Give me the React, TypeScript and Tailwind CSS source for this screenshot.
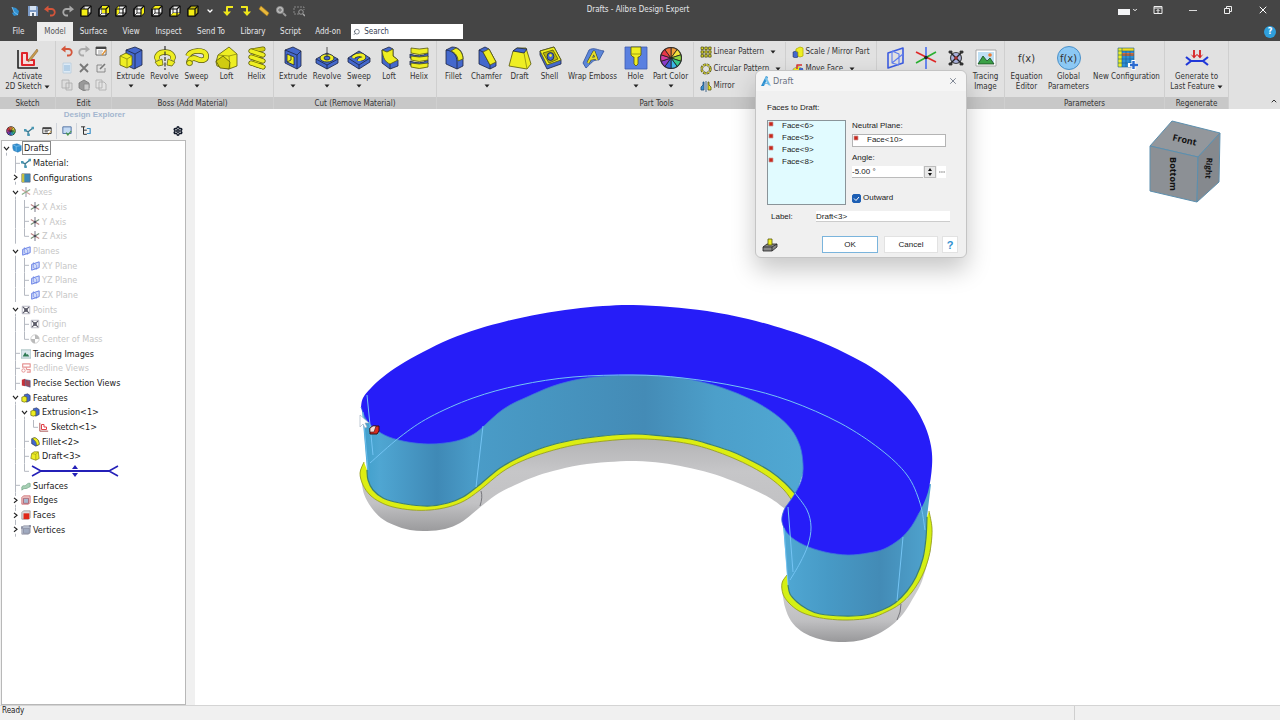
import type { ReactNode } from "react";
import { ChevronDown, ChevronUp, Search, Settings, X } from "lucide-react";
import clsx from "clsx";

type Point = [number, number];

const BLUE = "#4468cc";
const DARK = "#1c2440";
const YEL = "#eeee22";
const OLIVE = "#b4b000";

// Smooth curve through a list of points
function curve(pts: Point[], start = "M") {
  let d = `${start}${pts[0][0]} ${pts[0][1]}`;
  for (let i = 0; i < pts.length - 1; i++) {
    const a = pts[i - 1] ?? pts[i];
    const b = pts[i];
    const c = pts[i + 1];
    const e = pts[i + 2] ?? c;
    d += `C${b[0] + (c[0] - a[0]) / 6} ${b[1] + (c[1] - a[1]) / 6} ${c[0] - (e[0] - b[0]) / 6} ${c[1] - (e[1] - b[1]) / 6} ${c[0]} ${c[1]}`;
  }
  return d;
}

/* ---------- icons ---------- */

function Icon({ size = "size-6", box = 24, children }: { size?: string; box?: number; children: ReactNode }) {
  return (
    <svg
      viewBox={`0 0 ${box} ${box}`}
      className={clsx(size, "shrink-0")}
      fill="none"
      strokeWidth=".8"
      strokeLinejoin="round"
      aria-hidden="true"
    >
      {children}
    </svg>
  );
}

const tileIcons: Record<string, ReactNode> = {
  sketch: (
    <>
      <path d="M2 4v18h20" stroke="#222" strokeWidth="1.600" />
      <path d="M6 7h5v7h7v5H6z" stroke="#e0252b" strokeWidth="2" fill="#f7dcdc" />
      <path d="M21 3l-8 10-1 3 3-2 7-9z" fill="#c99a4a" stroke="#8a6a3a" strokeWidth=".6" />
    </>
  ),
  extrude: (
    <>
      <path d="M7 4l9-3 7 3v15l-8 4-8-4z" fill={BLUE} stroke={DARK} />
      <path d="M7 4l9 4v15M16 8l7-4" stroke={DARK} />
      <path d="M1 10l6-3 6 3v9l-5 3-7-3z" fill={YEL} stroke="#55550a" />
      <path d="M1 10l7 3 5-3M8 13v9" stroke="#8a8a10" />
    </>
  ),
  revolve: (
    <>
      <path d="M5 14c-3-4 1-8 7-8s10 4 7 8" stroke="#66660a" strokeWidth="5.400" />
      <path d="M5 14c-3-4 1-8 7-8s10 4 7 8" stroke={YEL} strokeWidth="4" />
      <path d="M2 16l7-3 1 6-5 1zM22 16l-7-3-1 6 5 1z" fill={YEL} stroke="#66660a" />
      <path d="M12 0v24" stroke="#333" strokeWidth="1.200" strokeDasharray="4 1.500" />
    </>
  ),
  sweep: (
    <>
      <path d="M3 10c2-6 17-7 18-1s-5 6-9 4-8 0-8 4" stroke="#55550a" strokeWidth="5.600" />
      <path d="M3 10c2-6 17-7 18-1s-5 6-9 4-8 0-8 4" stroke={YEL} strokeWidth="4.200" />
      <ellipse cx="4.500" cy="17" rx="3" ry="2.600" fill={YEL} stroke="#55550a" />
    </>
  ),
  loft: (
    <>
      <path d="M3 9L14 1l8 7v12l-8 3-12-3-1-4z" fill={YEL} stroke="#55550a" />
      <path d="M3 9l11 1 8-2M14 10l1 13" stroke="#8a8a10" />
      <path d="M1 15l7-5 7 6-1 7-9-1z" fill="#d0cc10" stroke="#55550a" />
    </>
  ),
  helix: (
    <>
      <path d="M6 5l12-2M6 5l12 4M6 11l12-2M6 11l12 4M6 17l12-2M6 17l12 4" stroke="#66660a" strokeWidth="5" strokeLinecap="round" />
      <path d="M6 5l12-2M6 11l12-2M6 17l12-2" stroke="#d4d010" strokeWidth="3.600" strokeLinecap="round" />
      <path d="M6 5l12 4M6 11l12 4M6 17l12 4" stroke="#55550a" strokeWidth="4.600" strokeLinecap="round" />
      <path d="M6 5l12 4M6 11l12 4M6 17l12 4" stroke={YEL} strokeWidth="3.600" strokeLinecap="round" />
    </>
  ),
  cutExtrude: (
    <>
      <path d="M4 4l8-3 8 4v15l-4 3-12-6z" fill={BLUE} stroke={DARK} />
      <path d="M4 4l12 5 4-4M16 9v14" stroke={DARK} />
      <path d="M6 8l7 3v8l-7-3z" fill={YEL} stroke={DARK} />
      <path d="M6 16l4-2v-4" stroke={DARK} />
    </>
  ),
  cutRevolve: (
    <>
      <path d="M1 13L12 7l11 6v4l-11 6-11-6z" fill={BLUE} stroke={DARK} />
      <path d="M1 13l11 6 11-6M12 19v4" stroke={DARK} />
      <ellipse cx="12" cy="12" rx="7" ry="4" fill={YEL} stroke={DARK} />
      <ellipse cx="12" cy="12" rx="3" ry="2" fill={BLUE} stroke={DARK} />
      <path d="M12 1v10" stroke="#333" />
    </>
  ),
  cutSweep: (
    <>
      <path d="M1 12L12 5l11 7v4l-11 7-11-7z" fill={BLUE} stroke={DARK} />
      <path d="M1 12l11 7 11-7M12 19v4" stroke={DARK} />
      <path d="M6 12c2-4 11-4 11-1s-5 1-5 4" stroke={DARK} strokeWidth="4.200" />
      <path d="M6 12c2-4 11-4 11-1s-5 1-5 4" stroke={YEL} strokeWidth="3" />
    </>
  ),
  cutLoft: (
    <>
      <path d="M5 4l7-3 4 2v7l5 4v6l-8 3-8-6z" fill={BLUE} stroke={DARK} />
      <path d="M5 4l5 2 6-3v7l5 4-8 4c-5-2-7-6-8-14z" fill={YEL} stroke="#55550a" />
      <path d="M13 18v5" stroke={DARK} />
    </>
  ),
  cutHelix: (
    <>
      <path d="M3 8q10 4 18-1v4q-8 3-18 1zM3 15q10 4 18-1v4q-8 3-18 1z" fill={BLUE} stroke={DARK} />
      <path d="M4 2q8 2 17 0v5q-9 3-17 0zM4 10q8 2 17 0v4q-9 3-17 0zM4 17q8 2 17 0v4q-9 3-17 0z" fill={YEL} stroke="#55550a" />
    </>
  ),
  fillet: (
    <>
      <path d="M4 4l6-3c8 0 11 6 11 12v7l-6 3L4 18z" fill={BLUE} stroke={DARK} />
      <path d="M4 4c8 1 11 6 11 12v7" stroke={DARK} />
      <path d="M9 5l5-3c5 2 7 7 7 11l-5 2c0-4-2-8-7-10z" fill={YEL} stroke="#55550a" />
    </>
  ),
  chamfer: (
    <>
      <path d="M4 4l6-3 4 2 7 13v4l-6 3L4 18z" fill={BLUE} stroke={DARK} />
      <path d="M4 4l4 2 7 13v4" stroke={DARK} />
      <path d="M8 6l6-3 7 13-6 3z" fill={YEL} stroke="#55550a" />
    </>
  ),
  draft: (
    <>
      <path d="M5 5l4-3h9l5 16-4 5L1 20z" fill={YEL} stroke="#55550a" />
      <path d="M5 5l4-3 10 1-3 4z" fill={BLUE} stroke={DARK} />
      <path d="M16 7l3 16" stroke="#8a8a10" />
    </>
  ),
  shell: (
    <>
      <path d="M2 5l14-4 7 13v4L9 23 2 9z" fill={BLUE} stroke={DARK} />
      <path d="M2 5l14-4 7 13-14 5z" fill={YEL} stroke="#55550a" />
      <path d="M5 7l10-3 5 9-9 4z" fill="#b9b50c" stroke="#55550a" />
      <ellipse cx="12.500" cy="10.500" rx="3.400" ry="4" fill={BLUE} stroke={DARK} />
      <circle cx="12.500" cy="9.500" r="1.400" fill={YEL} />
    </>
  ),
  wrap: (
    <>
      <path d="M8 4c5-3 8 0 15 1l-5 9c-6-1-8 4-13 8L2 17z" fill="#5c86d8" stroke="#2f4f9c" />
      <path d="M7 17l6-11 3 8M9 13l6-1" stroke="#33401c" strokeWidth="3" />
      <path d="M7 17l6-11 3 8M9 13l6-1" stroke="#e6dc2a" strokeWidth="2" />
    </>
  ),
  hole: (
    <>
      <path d="M1 1h22v22H1z" fill="#5a80e0" stroke="#3c5cb0" />
      <path d="M7 1h10v8l-2 2h-1v7l-2 2-2-2v-7H9L7 9z" fill={YEL} stroke="#55550a" />
      <path d="M7 8h10" stroke="#8a8a10" />
    </>
  ),
  plane: (
    <>
      <path d="M4 7l15-5v15L4 22z" stroke="#3c5ce0" strokeWidth="1.600" />
      <path d="M8 5l7 3v11M8 5v12l7 2M8 17l11-9" stroke="#5c7cf0" strokeWidth="1.100" />
    </>
  ),
  axis: (
    <>
      <path d="M12 1v22" stroke="#4a70f0" strokeWidth="1.600" />
      <path d="M2 6l20 10" stroke="#e02828" strokeWidth="1.600" />
      <path d="M2 17L22 6" stroke="#2ab030" strokeWidth="1.600" />
      <circle cx="12" cy="11.500" r="1.800" fill="#222" />
    </>
  ),
  point: (
    <>
      <circle cx="12" cy="12" r="5.500" fill="#a8b0dc" stroke="#444" strokeWidth="1.200" />
      <path d="M6 6l12 12M18 6L6 18" stroke="#222" strokeWidth="1.400" />
      <path d="M5 5h3v2H5zM16 5h3v2h-3zM5 17h3v2H5zM16 17h3v2h-3z" fill="#333" stroke="#333" />
      <circle cx="12" cy="12" r="1.800" fill="#a03030" />
    </>
  ),
  tracing: (
    <>
      <path d="M2 4h20v16H2z" fill="#fff" stroke="#999" />
      <path d="M4 6h16v12H4z" fill="#bfe0f4" />
      <path d="M4 18l5-8 4 5 3-3 4 6z" fill="#3aa046" stroke="#174a1c" />
      <circle cx="16" cy="9" r="1.800" fill="#f07a30" />
    </>
  ),
  config: (
    <>
      <path d="M3 2h16v19H3z" fill="#2f8fd8" />
      <path d="M3 2h4v19H3z" fill={YEL} />
      <path d="M7 2h12v3H7z" fill="#f3dc1c" />
      <path d="M7 7h12v3H7z" fill="#e06a30" />
      <path d="M3 2h16v19H3zM7 2v19M11 5v16M15 5v16M3 5h16M3 9h16M3 13h16M3 17h16" stroke="#1a5a88" strokeWidth=".6" />
      <path d="M18.500 14v10M13 19h10" stroke="#fff" strokeWidth="4" />
      <path d="M18.500 15v8M15 19h8" stroke="#2a6ad0" strokeWidth="2.400" />
    </>
  ),
  regen: (
    <>
      <path d="M9 4v7M15 4v7" stroke="#d82020" strokeWidth="1.800" />
      <path d="M5.500 8L9 12.500l3-3.500 3 3.500L18.500 8 15 10.500 12 8l-3 2.500z" fill="#d82020" />
      <path d="M1 11l5 4h12l5-4M1 19l5-4M23 19l-5-4" stroke="#2038d8" strokeWidth="2.200" />
    </>
  ),
};

const wheelColors = ["#f2a03c", "#f4e23c", "#8ed644", "#35c88a", "#39b8e8", "#3d62d8", "#8a3cc8", "#d03ca0", "#e83848", "#f2703c"];

function ColorWheel() {
  return (
    <>
      <circle cx="12" cy="12" r="11" fill="#222" />
      {wheelColors.map((color, i) => {
        const a = ((i * 36 - 90) * Math.PI) / 180;
        const b = ((i * 36 - 54) * Math.PI) / 180;
        return (
          <path
            key={color}
            d={`M12 12L${12 + 10.4 * Math.cos(a)} ${12 + 10.4 * Math.sin(a)}A10.400 10.400 0 0 1 ${12 + 10.4 * Math.cos(b)} ${12 + 10.4 * Math.sin(b)}z`}
            fill={color}
            stroke="#222"
          />
        );
      })}
    </>
  );
}

function UndoIcon({ flip, color }: { flip?: boolean; color: string }) {
  return (
    <Icon size="size-3" box={12}>
      <g transform={flip ? "matrix(-1 0 0 1 12 0)" : undefined}>
        <path d="M3 4h4.500a3 3 0 0 1 0 6.500H6" stroke={color} strokeWidth="1.800" />
        <path d="M0 4.200L4.500.5v7z" fill={color} />
      </g>
    </Icon>
  );
}

const cubeFaces: Record<string, string> = {
  front: "M1 4h7v7H1z",
  back: "M4 1h7v7H4z",
  left: "M1 4l3-3v7l-3 3z",
  right: "M8 4l3-3v7l-3 3z",
  top: "M1 4l3-3h7L8 4z",
  bottom: "M1 11l3-3h7l-3 3z",
};

function CubeIcon({ face }: { face: string }) {
  const solid = face === "all";
  return (
    <Icon size="size-3" box={12}>
      <path d="M1 4l3-3h7v7l-3 3H1z" fill={solid ? "#c8c010" : "#f4f4f4"} stroke="#0c0c0c" strokeWidth="1.200" />
      {!solid && <path d="M4 1v7h7M4 8l-3 3" stroke="#0c0c0c" />}
      <path d={cubeFaces[solid ? "front" : face]} fill="#f4ee14" />
      <path d="M1 4h7v7H1zM8 4l3-3" stroke="#0c0c0c" strokeWidth="1.200" />
    </Icon>
  );
}

/* ---------- title bar ---------- */

const quickTools: [string, ReactNode][] = [
  ["Home", <Icon size="size-3" box={12}><path d="M3 2l4 1 3 3-1 4-4 1-2-3 2-1z" fill="#2f8fd0" /><path d="M3 2l2 5 4 3" stroke="#8cc8f0" /></Icon>],
  ["Save", <Icon size="size-3" box={12}><path d="M1 1h9l1 1v9H1z" fill="#7d9cc8" /><path d="M3 1h6v4H3z" fill="#d5e2f2" /><path d="M3 7h6v4H3z" fill="#eef2f8" /><path d="M5 8h2v3H5z" fill="#567" /></Icon>],
  ["Undo", <UndoIcon color="#d4553a" />],
  ["Redo", <UndoIcon color="#a8a8a8" flip />],
  ["Front", <CubeIcon face="front" />],
  ["Back", <CubeIcon face="back" />],
  ["Left", <CubeIcon face="left" />],
  ["Right", <CubeIcon face="right" />],
  ["Top", <CubeIcon face="top" />],
  ["Bottom", <CubeIcon face="bottom" />],
  ["Isometric", <CubeIcon face="all" />],
  ["More views", <ChevronDown className="size-2 text-white" strokeWidth={4} />],
  ["Rotate left", <Icon size="size-3" box={12}><path d="M11 2H5v6" stroke="#f0e81c" strokeWidth="2" /><path d="M1 6.500h8L5 11z" fill="#f0e81c" /></Icon>],
  ["Rotate right", <Icon size="size-3" box={12}><path d="M1 2h6v6" stroke="#f0e81c" strokeWidth="2" /><path d="M3 6.500h8L7 11z" fill="#f0e81c" /></Icon>],
  ["Measure", <Icon size="size-3" box={12}><path d="M3 1l8 7-2 3-8-7z" fill="#e8b83c" stroke="#a87818" strokeWidth=".6" /></Icon>],
  ["Zoom", <Icon size="size-3" box={12}><circle cx="5" cy="5" r="3.600" fill="#bbb" stroke="#8c8c8c" /><path d="M8 8l3 3" stroke="#999" strokeWidth="2" /><path d="M3 5h4M5 3v4" stroke="#555" /></Icon>],
  ["Zoom window", <Icon size="size-3" box={12}><path d="M6 9H1V2h10v3" stroke="#999" strokeDasharray="2 1" /><circle cx="8" cy="7" r="2.300" stroke="#aaa" /><path d="M10 9l2 2" stroke="#aaa" strokeWidth="1.400" /></Icon>],
];

function TitleBar() {
  return (
    <div className="flex h-[22px] items-center text-white">
      <div className="flex flex-1">
        <div className="ml-1.5 grid w-[302px] grid-cols-17">
          {quickTools.map(([name, icon]) => (
            <button key={name} aria-label={name} className="flex h-5 items-center justify-center">
              {icon}
            </button>
          ))}
        </div>
      </div>
      <h1 className="pb-0.5 pr-1 text-[8px] text-gray-200">Drafts - Alibre Design Expert</h1>
      <div className="flex flex-1 items-center justify-end pb-0.5">
        <button aria-label="Account" className="flex w-6 items-center justify-center gap-0.5">
          <span className="mt-1 h-1.5 w-3 bg-gray-100" />
          <ChevronDown className="size-1.5" strokeWidth={4} />
        </button>
        <button aria-label="Ribbon display" className="flex w-[35px] justify-center">
          <Icon size="size-2.5" box={10}><path d="M1 1.500h8v7H1zM1 3h8M5 8V4.500M3.500 6L5 4.500 6.500 6" stroke="#eee" strokeWidth="1" /></Icon>
        </button>
        <button aria-label="Minimize" className="flex w-[35px] justify-center">
          <Icon size="size-2.5" box={10}><path d="M1 5.500h8" stroke="#ddd" strokeWidth="1" /></Icon>
        </button>
        <button aria-label="Restore" className="flex w-[35px] justify-center">
          <Icon size="size-2.5" box={10}><path d="M1.500 3.500h5v5h-5zM3.500 3V1.500h5v5H7" stroke="#eee" strokeWidth="1" /></Icon>
        </button>
        <button aria-label="Close" className="flex w-[35px] justify-center">
          <X className="size-3" strokeWidth={2} />
        </button>
      </div>
    </div>
  );
}

const tabs: [string, string][] = [
  ["File", "w-[37px]"],
  ["Model", "w-9"],
  ["Surface", "w-[41px]"],
  ["View", "w-[34px]"],
  ["Inspect", "w-[41px]"],
  ["Send To", "w-11"],
  ["Library", "w-10"],
  ["Script", "w-[35px]"],
  ["Add-on", "w-10"],
];

function TabBar() {
  return (
    <nav className="flex h-[19px] items-stretch text-[8px] text-gray-200">
      {tabs.map(([name, width]) => (
        <button key={name} className={clsx(width, "text-center", name === "Model" && "bg-[#ececec] text-[#555]")}>
          {name}
        </button>
      ))}
      <label className="ml-[3px] mt-0.5 flex h-[15px] w-28 items-center gap-1 bg-white pl-0.5">
        <Search className="size-2 -scale-x-100 text-gray-700" />
        <input aria-label="Search" placeholder="Search" className="w-full text-[8px] outline-none placeholder:text-gray-700" />
      </label>
      <button aria-label="Help" className="ml-auto mr-1 mt-1 flex size-3 items-center justify-center rounded-full bg-[#2f9fdc] text-[9px] font-bold text-white">
        ?
      </button>
    </nav>
  );
}

/* ---------- ribbon ---------- */

function Arrow() {
  return (
    <svg viewBox="0 0 6 4" className="inline-block h-1 w-1.5 shrink-0" aria-hidden="true">
      <path d="M.5.5h5L3 3.500z" fill="#222" />
    </svg>
  );
}

type TileProps = { icon: string; label: string; second?: string; width?: string; arrow?: boolean; inlineArrow?: boolean };

function Tile({ icon, label, second, width = "w-[30px]", arrow, inlineArrow }: TileProps) {
  return (
    <button aria-label={label || icon} className={clsx(width, "flex flex-col items-center whitespace-nowrap")}>
      {icon === "fx" || icon === "fxGlobal" ? (
        <span
          className={clsx(
            "flex size-6 items-center justify-center rounded-full text-[11px] leading-none",
            icon === "fxGlobal" && "border border-[#4a90c8] bg-[#8cc8f4]"
          )}
        >
          f(x)
        </span>
      ) : (
        <Icon>{icon === "wheel" ? <ColorWheel /> : tileIcons[icon]}</Icon>
      )}
      <span className="mt-0.5">{label}</span>
      {second && (
        <span className="flex items-center gap-0.5">
          {second}
          {inlineArrow && <Arrow />}
        </span>
      )}
      {arrow && (
        <span className="flex h-2 items-center">
          <Arrow />
        </span>
      )}
    </button>
  );
}

function Group({ title, width, children }: { title?: string; width: string; children: ReactNode }) {
  return (
    <section className={clsx(width, "flex shrink-0 flex-col border-r border-[#cfcfcf]")}>
      <div className="flex h-14 justify-center pt-[5px]">{children}</div>
      <div className="h-3 bg-[#c8c8c8] pt-px text-center leading-3">{title}</div>
    </section>
  );
}

const boss: TileProps[] = [
  { icon: "extrude", label: "Extrude", width: "w-[34px]", arrow: true },
  { icon: "revolve", label: "Revolve", width: "w-[34px]", arrow: true },
  { icon: "sweep", label: "Sweep", arrow: true },
  { icon: "loft", label: "Loft" },
  { icon: "helix", label: "Helix" },
];

const cut: TileProps[] = [
  { icon: "cutExtrude", label: "Extrude", width: "w-[34px]", arrow: true },
  { icon: "cutRevolve", label: "Revolve", width: "w-[34px]", arrow: true },
  { icon: "cutSweep", label: "Sweep", arrow: true },
  { icon: "cutLoft", label: "Loft" },
  { icon: "cutHelix", label: "Helix" },
];

const partTools: TileProps[] = [
  { icon: "fillet", label: "Fillet" },
  { icon: "chamfer", label: "Chamfer", width: "w-9", arrow: true },
  { icon: "draft", label: "Draft" },
  { icon: "shell", label: "Shell" },
  { icon: "wrap", label: "Wrap Emboss", width: "w-14" },
  { icon: "hole", label: "Hole", arrow: true },
  { icon: "wheel", label: "Part Color", width: "w-10", arrow: true },
];

const editIcons: [string, ReactNode][] = [
  ["Undo", <UndoIcon color="#d4553a" />],
  ["Redo", <UndoIcon color="#aaa" flip />],
  ["Properties", <Icon size="size-3" box={12}><path d="M1 2h10v8H1z" fill="#fff" stroke="#444" /><path d="M1 2h10v2H1z" fill="#444" /><path d="M3 6h5M3 8h4" stroke="#888" /><path d="M11 5L7 10" stroke="#e0953a" strokeWidth="1.500" /></Icon>],
  ["Select", <Icon size="size-3" box={12}><path d="M2 1h8v10H2z" fill="#dceaf6" stroke="#b8ccdc" /><path d="M3 4h6M3 6h6M3 8h6" stroke="#7aa8d0" /></Icon>],
  ["Delete", <Icon size="size-3" box={12}><path d="M2 2l8 8M10 2l-8 8" stroke="#777" strokeWidth="1.800" /></Icon>],
  ["Edit", <Icon size="size-3" box={12}><path d="M7 3H2v7h8V6" stroke="#777" /><path d="M10 2L5 7" stroke="#777" strokeWidth="1.600" /></Icon>],
  ["Cut", <Icon size="size-3" box={12}><path d="M1 1h7v8H1zM5 4h6v7H5z" fill="#ddd" stroke="#aaa" /></Icon>],
  ["Paste", <Icon size="size-3" box={12}><path d="M1 4l5-3 5 3v5l-5 3-5-3z" fill="#999" stroke="#777" /><path d="M6 5h5v6H6z" fill="#ccc" stroke="#888" /></Icon>],
  ["Copy", <Icon size="size-3" box={12}><path d="M1 1h6v8H1zM4 3h5l2 2v6H4z" fill="#e4e4e4" stroke="#aaa" /></Icon>],
];

const PatternIcon = (
  <Icon size="size-3" box={12}>
    <path d="M1 1h2.500v2.500H1zM4.800 1h2.500v2.500H4.800zM8.600 1h2.500v2.500H8.600zM1 4.800h2.500v2.500H1zM4.800 4.800h2.500v2.500H4.800zM8.600 4.800h2.500v2.500H8.600zM1 8.600h2.500v2.500H1zM4.800 8.600h2.500v2.500H4.800zM8.600 8.600h2.500v2.500H8.600z" fill="#dcd820" stroke="#55551a" />
  </Icon>
);

const CircularIcon = (
  <Icon size="size-3" box={12}>
    <circle cx="6" cy="6" r="4.300" stroke="#44441a" strokeWidth="2.600" strokeDasharray="2.600 .8" />
    <circle cx="6" cy="6" r="4.300" stroke="#d8d430" strokeWidth="1.300" strokeDasharray="2.200 1.200" />
  </Icon>
);

const MirrorIcon = (
  <Icon size="size-3" box={12}>
    <path d="M1 7l2-2V2h1v8H1zM6 1v11" fill="#3a90d0" stroke="#1c4c78" />
    <path d="M11 7L9 5V2H8v8h3z" fill="#ece41c" stroke="#55551a" />
  </Icon>
);

const ScaleIcon = (
  <Icon size="size-3" box={12}>
    <path d="M1 6l3-1 2 1v5l-2 1-3-1z" fill={BLUE} stroke={DARK} strokeWidth=".5" />
    <path d="M4 3l4-2 3 1v8l-3 1-2-1V6L4 5z" fill={YEL} stroke={OLIVE} />
  </Icon>
);

const MoveIcon = (
  <Icon size="size-3" box={12}>
    <path d="M1 6l5-3 5 3v5H1z" fill={YEL} stroke="#888" strokeWidth=".6" />
    <path d="M5 6V2h5" stroke="#d83030" strokeWidth="1.500" />
    <path d="M7 5h4v5H7z" fill={BLUE} />
  </Icon>
);

function SmallTool({ icon, label, arrow }: { icon: ReactNode; label: string; arrow?: boolean }) {
  return (
    <button className="flex h-[17px] items-center gap-0.5 whitespace-nowrap">
      {icon}
      <span>{label}</span>
      {arrow && (
        <span className="ml-1 flex">
          <Arrow />
        </span>
      )}
    </button>
  );
}

function Ribbon() {
  return (
    <div className="flex bg-[#e1e1e1] text-[8px] leading-[10px] text-[#333]">
      <Group title="Sketch" width="w-14">
        <Tile icon="sketch" label="Activate" second="2D Sketch" width="w-14" inlineArrow />
      </Group>
      <Group title="Edit" width="w-14">
        <div className="-mt-1 grid h-[51px] w-[51px] grid-cols-3">
          {editIcons.map(([name, icon]) => (
            <button key={name} aria-label={name} className="flex items-center justify-center">
              {icon}
            </button>
          ))}
        </div>
      </Group>
      <Group title="Boss (Add Material)" width="w-[162px]">
        {boss.map((t) => <Tile key={t.icon} {...t} />)}
      </Group>
      <Group title="Cut (Remove Material)" width="w-[163px]">
        {cut.map((t) => <Tile key={t.icon} {...t} />)}
      </Group>
      <Group title="Part Tools" width="w-[440px]">
        {partTools.map((t) => <Tile key={t.icon} {...t} />)}
        <div className="-mt-1 ml-0.5 flex w-[92px] flex-col border-l border-[#cfcfcf] pl-1.5 pt-px">
          <SmallTool icon={PatternIcon} label="Linear Pattern" arrow />
          <SmallTool icon={CircularIcon} label="Circular Pattern" arrow />
          <SmallTool icon={MirrorIcon} label="Mirror" />
        </div>
        <div className="-mt-1 flex w-[90px] flex-col border-l border-[#cfcfcf] pl-1.5 pt-px">
          <SmallTool icon={ScaleIcon} label="Scale / Mirror Part" />
          <SmallTool icon={MoveIcon} label="Move Face" arrow />
        </div>
      </Group>
      <Group width="w-32">
        <Tile icon="plane" label="" />
        <Tile icon="axis" label="" />
        <Tile icon="point" label="" />
        <Tile icon="tracing" label="Tracing" second="Image" />
      </Group>
      <Group title="Parameters" width="w-40">
        <Tile icon="fx" label="Equation" second="Editor" width="w-10" />
        <Tile icon="fxGlobal" label="Global" second="Parameters" width="w-11" />
        <Tile icon="config" label="New Configuration" width="w-[72px]" />
      </Group>
      <Group title="Regenerate" width="w-16">
        <Tile icon="regen" label="Generate to" second="Last Feature" width="w-16" inlineArrow />
      </Group>
      <button aria-label="Collapse ribbon" className="ml-auto flex items-end p-0.5 pb-1">
        <ChevronUp className="size-2" strokeWidth={3} />
      </button>
    </div>
  );
}

/* ---------- design explorer ---------- */

const small: Record<string, ReactNode> = {
  part: (
    <>
      <path d="M1 2l5-1 5 2v6l-4 2-5-2-1-3z" fill="#2f8fd0" stroke="#1c6aa8" strokeWidth=".6" />
      <path d="M1 2l4 2 6-1M5 4v6" stroke="#8cc8f0" />
    </>
  ),
  material: (
    <>
      <path d="M1 5l4 2 5-4M5 7v4" stroke="#3a7890" strokeWidth="1.600" />
      <path d="M0 3.500h3v3H0zM9 1h3v3H9zM4 9h3v3H4z" fill="#4a98b4" />
    </>
  ),
  configs: (
    <>
      <path d="M1 1h10v10H1z" fill="#3a88b8" stroke="#667" />
      <path d="M1 1h3v10H1z" fill="#c8c040" />
    </>
  ),
  axis: (
    <>
      <path d="M6 0v12" stroke="#667" strokeWidth="1.300" />
      <path d="M1 3l10 6" stroke="#a66" strokeWidth="1.300" />
      <path d="M1 9l10-6" stroke="#575" strokeWidth="1.300" />
      <circle cx="6" cy="6" r="1.600" fill="#223" />
    </>
  ),
  axes: (
    <>
      <path d="M6 0v12" stroke="#889" strokeWidth="1.300" />
      <path d="M1 3l10 6" stroke="#c88" strokeWidth="1.300" />
      <path d="M1 9l10-6" stroke="#6a9a6a" strokeWidth="1.300" />
    </>
  ),
  plane: (
    <>
      <path d="M2 4l9-3v7l-9 3z" fill="#c8d4fa" stroke="#4a68e0" strokeWidth="1.200" />
      <path d="M4 2l4 3v5M4 2v6l4 2" stroke="#4a68e0" />
    </>
  ),
  point: (
    <>
      <path d="M2 2l8 8M10 2l-8 8" stroke="#334" strokeWidth="1.400" />
      <path d="M1.500 1.500h9v9h-9z" stroke="#99a" strokeWidth="1" />
      <circle cx="6" cy="6" r="2.300" fill="#334" />
    </>
  ),
  mass: (
    <>
      <circle cx="6" cy="6" r="5" fill="#fff" stroke="#aaa" />
      <path d="M6 6V1a5 5 0 0 1 5 5zM6 6v5a5 5 0 0 1-5-5z" fill="#aaa" />
    </>
  ),
  tracing: (
    <>
      <path d="M0 1h12v10H0z" fill="#dce8ee" stroke="#8aa" />
      <path d="M2 9l3-5 2 3 1-1 2 3z" fill="#2f7a54" />
    </>
  ),
  redline: (
    <>
      <path d="M2 1h9v4H2z" stroke="#e07a7a" strokeWidth="1.400" />
      <circle cx="3" cy="9" r="2" stroke="#e07a7a" strokeWidth="1.200" />
      <path d="M6 5l1 3h4v3H7" stroke="#e07a7a" strokeWidth="1.400" />
    </>
  ),
  section: (
    <>
      <path d="M1 2l4-1v9l-4-1z" fill="#c83038" />
      <path d="M5 2l6 1v8l-6-2z" fill="#a04858" stroke="#4a5a8a" />
    </>
  ),
  features: (
    <>
      <path d="M4 2l4-1 3 2v6l-4 2-3-2z" fill={BLUE} stroke={DARK} strokeWidth=".6" />
      <path d="M1 5l3-1 3 1v5l-3 1-3-1z" fill={YEL} stroke="#66660a" />
    </>
  ),
  sketch: (
    <>
      <path d="M1 1v10h10" stroke="#a55" strokeWidth="1.200" />
      <path d="M3 3h3v3h3v3H3z" stroke="#e04048" strokeWidth="1.200" />
    </>
  ),
  fillet: (
    <>
      <path d="M2 2l3-1c4 0 6 4 6 8l-4 2-5-3z" fill={BLUE} stroke={DARK} strokeWidth=".7" />
      <path d="M5 1c4 0 6 4 6 8l-3 1c0-4-2-6-5-8z" fill={YEL} stroke="#66660a" strokeWidth=".6" />
    </>
  ),
  draft: (
    <>
      <path d="M2 3l3-2h5l1 8-4 2-6-2z" fill={YEL} stroke="#77770a" />
      <path d="M2 3l5 1v7M7 4l3-3" stroke="#9a9610" />
    </>
  ),
  surfaces: <path d="M1 7c2-3 3 0 5-2s3-3 5-2v4c-2 0-3 2-5 2s-3 0-5 2z" fill="#a8d0b4" stroke="#6aa080" />,
  edges: (
    <>
      <path d="M1 3l2-2h8v8l-2 2H1z" fill="#f0c8c8" stroke="#c04850" />
      <path d="M3 4h6v6H3z" fill="#a8b8d0" stroke="#a04858" />
    </>
  ),
  faces: (
    <>
      <path d="M1 3l2-2h8v8l-2 2H1z" fill="#ddd" stroke="#888" />
      <path d="M3 4h7v7H3z" fill="#e02818" />
    </>
  ),
  vertices: (
    <>
      <path d="M1 3l2-2h8v8l-2 2H1z" fill="#bcc4d4" stroke="#889" />
      <path d="M0 2h2v2H0zM10 0h2v2h-2zM3 4h7v6H3z" fill="#a0aac0" stroke="#778" strokeWidth=".6" />
    </>
  ),
};

// One letter per column: "." blank, "|" line, "t" tee, "l" corner, "v" open, ">" closed
type Row = [cells: string, icon: string, label: string, dim?: boolean];

const rows: Row[] = [
  ["v", "part", "Drafts"],
  [".t", "material", "Material:"],
  [".>", "configs", "Configurations"],
  [".v", "axes", "Axes", true],
  [".|t", "axis", "X Axis", true],
  [".|t", "axis", "Y Axis", true],
  [".|l", "axis", "Z Axis", true],
  [".v", "plane", "Planes", true],
  [".|t", "plane", "XY Plane", true],
  [".|t", "plane", "YZ Plane", true],
  [".|l", "plane", "ZX Plane", true],
  [".v", "point", "Points", true],
  [".|t", "point", "Origin", true],
  [".|l", "mass", "Center of Mass", true],
  [".t", "tracing", "Tracing Images"],
  [".t", "redline", "Redline Views", true],
  [".t", "section", "Precise Section Views"],
  [".v", "features", "Features"],
  [".|v", "features", "Extrusion<1>"],
  [".||l", "sketch", "Sketch<1>"],
  [".|t", "fillet", "Fillet<2>"],
  [".|t", "draft", "Draft<3>"],
  [".|l", "rollback", ""],
  [".t", "surfaces", "Surfaces"],
  [".>", "edges", "Edges"],
  [".>", "faces", "Faces"],
  [".>", "vertices", "Vertices"],
];

const cellPaths: Record<string, string> = {
  "|": "M4.500 0V15",
  t: "M4.500 0V15M4.500 7.500H9",
  l: "M4.500 0V7.500H9",
  v: "M4.500 12V15",
  ">": "M4.500 0V3M4.500 12V15",
};

function TreeCell({ kind }: { kind: string }) {
  return (
    <svg viewBox="0 0 9 15" preserveAspectRatio="none" className="h-full w-[9px] shrink-0" fill="none" aria-hidden="true">
      {cellPaths[kind] && <path d={cellPaths[kind]} stroke="#b4b8c0" />}
      {kind === "v" && <path d="M2 6l2.500 3L7 6" stroke="#222" strokeWidth="1.200" />}
      {kind === ">" && <path d="M3 5l3 2.500L3 10" stroke="#222" strokeWidth="1.200" />}
    </svg>
  );
}

function RollbackBar() {
  return (
    <svg viewBox="0 0 88 12" className="h-3 w-[88px]" fill="none" aria-hidden="true">
      <path d="M10 6h68" stroke="#2420b8" strokeWidth="2" />
      <path d="M1 1l9 5-9 5M87 1l-9 5 9 5" stroke="#2420b8" strokeWidth="1.600" />
      <path d="M44 0l3 4h-6zM44 12l3-4h-6z" fill="#2420b8" />
    </svg>
  );
}

function DesignExplorer() {
  return (
    <aside className="flex w-[195px] shrink-0 flex-col bg-[#f0f0f0] pr-2">
      <h2 className="h-3 pl-0.5 text-center font-['Liberation_Sans',sans-serif] text-[8px] font-bold leading-3 text-[#a3b6cf]">
        Design Explorer
      </h2>
      <div className="flex h-[19px] items-center pl-0.5">
        <button aria-label="Colors" className="flex w-[18px] justify-center">
          <Icon size="size-2.5"><ColorWheel /></Icon>
        </button>
        <button aria-label="Material" className="flex w-[18px] justify-center">
          <Icon size="size-2.5" box={12}>{small.material}</Icon>
        </button>
        <button aria-label="Properties" className="flex w-[18px] justify-center">
          <Icon size="size-2.5" box={12}><path d="M1 2h10v7H1z" fill="#fff" stroke="#444" strokeWidth="1.200" /><path d="M1 3h10M3 5h6M3 7h4" stroke="#444" strokeWidth="1.200" /><path d="M11 6l-4 5" stroke="#c80" /></Icon>
        </button>
        <button aria-label="Preview" className="flex h-4 w-[21px] items-center justify-center border-x border-gray-300">
          <Icon size="size-2.5" box={12}><path d="M1 1h10v8H1z" fill="#c4daf4" stroke="#5878a8" strokeWidth="1.200" /><path d="M5 8l2 3 4-5" stroke="#4a9a4a" strokeWidth="1.400" /></Icon>
        </button>
        <button aria-label="Tree" className="flex w-[18px] justify-center">
          <Icon size="size-2.5" box={12}><path d="M0 1h5M3 1v9h4M3 5h4" stroke="#333" strokeWidth="1.200" /><path d="M7 3h4v6H7" stroke="#3a90c8" strokeWidth="1.400" /></Icon>
        </button>
        <button aria-label="Settings" className="ml-auto mr-1 flex">
          <Settings className="size-2.5 text-gray-900" strokeWidth={3.5} />
        </button>
      </div>
      <div className="mx-px grow border border-[#b8b8b8] bg-white">
        <ul role="tree" className="grid h-[396px] auto-rows-fr text-[9px] leading-none text-[#1a1a1a]">
          {rows.map(([cells, icon, label, dim], i) => (
            <li key={i} role="treeitem" aria-level={cells.length} className="flex min-h-0 items-center">
              {cells.split("").map((kind, k) => <TreeCell key={k} kind={kind} />)}
              {icon === "rollback" ? (
                <span className="ml-0.5"><RollbackBar /></span>
              ) : (
                <span className={clsx("ml-px flex", dim && "opacity-80")}>
                  <Icon size="size-2.5" box={12}>{small[icon]}</Icon>
                </span>
              )}
              <span className={clsx("ml-px px-px leading-3", dim && "text-[#c6c6c6]", i === 0 && "outline outline-[#888]")}>
                {label}
              </span>
            </li>
          ))}
        </ul>
      </div>
    </aside>
  );
}

/* ---------- model view ---------- */

const topLeft: Point[] = [[361, 407], [363, 398], [371, 388], [383, 377], [400, 365], [423, 352], [450, 339], [478, 329], [507, 321], [540, 314], [573, 309], [603, 306], [633, 305]];
const topRight: Point[] = [[633, 305], [670, 307], [707, 311], [748, 319], [787, 330], [821, 342], [853, 357], [877, 371], [898, 388], [914, 406], [925, 426], [931, 446], [932, 466], [928, 492], [919, 513]];
const legEdge: Point[] = [[919, 513], [911, 527], [900, 539], [884, 549], [868, 553], [848, 555], [825, 552], [804, 545], [789, 535], [782, 522], [784, 510], [790, 501], [797, 490], [802, 478], [803, 464], [800, 446], [791, 429]];
const innerEdge: Point[] = [[791, 429], [775, 414], [752, 400], [723, 388], [693, 380], [663, 376], [633, 375], [606, 376], [580, 379], [553, 386], [527, 397], [510, 405], [497, 414], [485, 425], [474, 434], [460, 440], [445, 443], [428, 444], [408, 442], [389, 437], [375, 429], [366, 419], [361, 407]];
const topFace: Point[] = [...topLeft, ...topRight.slice(1), ...legEdge.slice(1), ...innerEdge.slice(1)];

const wallBottom: Point[] = [[367, 470], [368, 480], [373, 490], [383, 498], [395, 502], [412, 505], [430, 506], [448, 503], [463, 497], [478, 486], [500, 468], [520, 457], [545, 447], [573, 440], [603, 436], [633, 434], [662, 436], [690, 439], [712, 445], [733, 452], [752, 461], [770, 471], [785, 483], [796, 495]];
const rimBottom: Point[] = [[364, 462], [360, 473], [363, 485], [370, 495], [380, 502], [393, 507], [412, 510], [430, 510], [448, 507], [464, 501], [480, 490], [502, 472], [522, 461], [547, 452], [575, 445], [605, 441], [633, 439], [662, 440], [690, 444], [712, 450], [733, 458], [752, 467], [770, 478], [784, 490], [793, 502]];
const baseBottom: Point[] = [[361, 478], [364, 494], [371, 507], [381, 518], [394, 525], [410, 530], [427, 531], [445, 529], [460, 523], [472, 514], [484, 504], [499, 493], [515, 485], [534, 477], [553, 471], [580, 465], [608, 462], [636, 461], [662, 463], [685, 467], [710, 473], [733, 481], [752, 489], [770, 498], [784, 508]];

const legWall: Point[] = [[788, 585], [790, 594], [797, 602], [807, 609], [820, 614], [843, 616], [865, 615], [882, 610], [895, 603], [907, 591], [916, 577], [923, 558], [926, 538], [927, 517]];
const legRim: Point[] = [[787, 575], [782, 583], [783, 594], [789, 603], [799, 611], [812, 616], [828, 619], [848, 620], [870, 618], [886, 612], [900, 604], [912, 592], [922, 576], [928, 560], [931, 545], [932, 528], [929, 511]];
const legBase: Point[] = [[782, 590], [785, 607], [791, 621], [801, 631], [813, 637], [828, 641], [845, 642], [862, 640], [878, 634], [892, 625], [903, 614], [912, 600], [922, 581], [931, 550]];

const hiddenBack: Point[] = [[370, 463], [400, 437], [430, 417], [473, 398], [520, 385], [573, 377], [633, 375], [683, 378], [740, 387], [790, 401], [840, 423], [880, 449], [907, 475], [920, 503], [925, 530]];
const hiddenInner: Point[] = [[795, 493], [807, 510], [811, 527], [808, 545], [800, 563], [790, 580]];

function ModelView() {
  return (
    <svg viewBox="195 109 1085 596" className="h-full w-full" fill="none" role="img" aria-label="Model view">
      <defs>
        <linearGradient id="wall" gradientUnits="userSpaceOnUse" x1="362" y1="0" x2="804" y2="0">
          <stop offset="0" stopColor="#3f9fcb" />
          <stop offset=".04" stopColor="#4fa6d2" />
          <stop offset=".17" stopColor="#3f89b6" />
          <stop offset=".25" stopColor="#4a9cc8" />
          <stop offset=".4" stopColor="#4796c1" />
          <stop offset=".64" stopColor="#448bb6" />
          <stop offset=".8" stopColor="#4c9fca" />
          <stop offset="1" stopColor="#50a8d3" />
        </linearGradient>
        <linearGradient id="leg" gradientUnits="userSpaceOnUse" x1="783" y1="0" x2="932" y2="0">
          <stop offset="0" stopColor="#50a8d4" />
          <stop offset=".3" stopColor="#479ac6" />
          <stop offset=".65" stopColor="#438bb6" />
          <stop offset="1" stopColor="#50a5d0" />
        </linearGradient>
        <linearGradient id="base" gradientUnits="userSpaceOnUse" x1="0" y1="440" x2="0" y2="530">
          <stop offset="0" stopColor="#b4b4b6" />
          <stop offset=".35" stopColor="#c6c6c8" />
          <stop offset=".7" stopColor="#c2c2c4" />
          <stop offset="1" stopColor="#9c9c9e" />
        </linearGradient>
        <linearGradient id="legBase" gradientUnits="userSpaceOnUse" x1="0" y1="600" x2="0" y2="642">
          <stop offset="0" stopColor="#cacacc" />
          <stop offset=".5" stopColor="#bfbfc1" />
          <stop offset="1" stopColor="#98989a" />
        </linearGradient>
      </defs>

      {/* Base body */}
      <path d={`${curve(baseBottom)}${curve([...rimBottom].reverse(), "L")}z`} fill="url(#base)" />
      <path d={`${curve(legBase)}${curve([...legRim].reverse(), "L")}z`} fill="url(#legBase)" />
      <path d="M481 491q2 6-1 15M901 604q0 8-4 16" stroke="#77777c" />

      {/* Drafted walls */}
      <path
        d={`M362 410L367 470${curve(wallBottom, "L")}L803 473 806 445 793 420 752 393 693 372 633 368 400 390z`}
        fill="url(#wall)"
      />
      <path d={`M783 525L788 585${curve(legWall, "L")}L931 484 850 500z`} fill="url(#leg)" />

      {/* Fillet rim */}
      <path d={`${curve(rimBottom)}${curve([...wallBottom].reverse(), "L")}z`} fill="#dcee12" />
      <path d={curve(rimBottom)} stroke="#8e9410" strokeWidth=".8" />
      <path d={curve(wallBottom)} stroke="#3d7f70" strokeWidth="1.200" />
      <path d={`${curve(legRim)}${curve([...legWall].reverse(), "L")}z`} fill="#d4f014" />
      <path d={curve(legRim)} stroke="#8e9410" strokeWidth=".8" />
      <path d={curve(legWall)} stroke="#3d7f70" strokeWidth="1.200" />

      {/* Neutral plane face */}
      <path d={`${curve(topFace)}z`} fill="#261df8" />
      <path d={curve([...legEdge, ...innerEdge.slice(1)])} stroke="#3f74dc" strokeWidth=".8" />

      {/* Edges seen through the body */}
      <g stroke="#74c4f4">
        <path d={curve(hiddenBack)} />
        <path d={curve(hiddenInner)} />
        <path d="M367 395L373 455M483 426L476 487M788 507L793 572M903 537L897 601" />
        <path d="M363 412L368 470M784 528L788 585" strokeWidth=".8" />
      </g>

      {/* Pointer with face filter badge */}
      <path d="M360 415v12l3-3 2 4 2-1-2-4h4z" fill="#fff" stroke="#9ab" strokeWidth=".6" />
      <path d="M370 428l3-2h6v5l-2 3h-7z" fill="#d82c20" stroke="#3a1010" />
      <path d="M370 428l3-2h3l-2 6h-4z" fill="#f4dcd8" stroke="#3a1010" strokeWidth=".6" />

      {/* View cube */}
      <g stroke="#5c8fae" strokeWidth="1">
        <path d="M1172 121l48 12-22 24-48-11z" fill="#93979c" />
        <path d="M1150 146l48 11-1 45-47-11z" fill="#8c9095" />
        <path d="M1198 157l22-24-1 49-22 20z" fill="#85898e" />
      </g>
      <g fill="#111" className="font-['Open_Sans',sans-serif] text-[9px] font-bold" textAnchor="middle">
        <text transform="translate(1184 143) rotate(13)">Front</text>
        <text transform="translate(1170 174) rotate(90)">Bottom</text>
        <text transform="translate(1206 168) rotate(94)" className="text-[8px]">Right</text>
      </g>
    </svg>
  );
}

/* ---------- draft dialog ---------- */

function FaceMark() {
  return (
    <svg viewBox="0 0 6 6" className="size-1.5 shrink-0" aria-hidden="true">
      <path d="M1 1h4v4H1z" fill="#c8281c" stroke="#c99" strokeWidth=".7" />
    </svg>
  );
}

function DraftDialog() {
  return (
    <form
      role="dialog"
      aria-label="Draft"
      className="absolute left-[755px] top-[70px] w-[212px] rounded-md border border-[#c4c4c4] bg-[#f0f0f0] pb-1 font-['Liberation_Sans',sans-serif] text-[8px] leading-[10px] text-[#222] shadow-[0_12px_24px_rgba(0,0,0,0.22)]"
    >
      <div className="flex h-5 items-center rounded-t-md bg-[#f5f5f5] pl-1 pr-2">
        <Icon size="size-3" box={12}>
          <path d="M1 11L6 1l2 1-4 9z" fill="#2b8fd0" />
          <path d="M6 1l5 10-3-1-3-6z" fill="#7cc4ec" />
          <path d="M3 9l6-1" stroke="#58acdf" />
        </Icon>
        <span className="ml-px font-['DejaVu_Sans_Condensed','Noto_Sans',sans-serif] text-[9px] text-gray-500">Draft</span>
        <button type="button" aria-label="Close" className="ml-auto">
          <X className="size-2.5 text-gray-500" strokeWidth={2} />
        </button>
      </div>
      <div className="pl-[11px] pt-3">
        <div id="faces-label">Faces to Draft:</div>
        <div className="mt-[7px] flex gap-1.5">
          <ul aria-labelledby="faces-label" className="h-[85px] w-[79px] border border-[#8a9499] bg-[#e1fbff]">
            {["Face<6>", "Face<5>", "Face<9>", "Face<8>"].map((face) => (
              <li key={face} className="flex h-3 gap-2">
                <FaceMark />
                {face}
              </li>
            ))}
          </ul>
          <div className="w-[94px] pt-px">
            <label htmlFor="neutral" className="block">Neutral Plane:</label>
            <div className="mt-[3px] flex h-[13px] gap-2 border border-[#b4b4b4] bg-white">
              <FaceMark />
              <input id="neutral" defaultValue="Face<10>" className="h-2.5 w-full leading-[10px] outline-none" />
            </div>
            <label htmlFor="angle" className="mt-1.5 block">Angle:</label>
            <div className="mt-[3px] flex h-3 gap-px">
              <input id="angle" defaultValue="-5.00 °" className="w-[71px] border-b border-[#bbb] bg-white outline-none" />
              <div className="flex w-3 flex-col border border-[#bbb] bg-[#e8e8e8]">
                <button type="button" aria-label="Increase angle" className="flex flex-1 items-center justify-center">
                  <svg viewBox="0 0 4 3" className="h-[3px] w-1"><path d="M0 3h4L2 0z" fill="#111" /></svg>
                </button>
                <button type="button" aria-label="Decrease angle" className="flex flex-1 items-center justify-center">
                  <svg viewBox="0 0 4 3" className="h-[3px] w-1"><path d="M0 0h4L2 3z" fill="#111" /></svg>
                </button>
              </div>
              <button type="button" aria-label="Angle options" className="flex w-[9px] items-center justify-center bg-white">
                <svg viewBox="0 0 6 2" className="h-0.5 w-1.5"><path d="M0 1h6" stroke="#777" strokeDasharray="1.500 .7" /></svg>
              </button>
            </div>
            <label className="mt-[15px] flex h-2.5 items-center gap-0.5">
              <span className="grid size-[9px] place-items-center">
                <input
                  type="checkbox"
                  defaultChecked
                  className="col-start-1 row-start-1 size-[9px] appearance-none rounded-[2px] border border-gray-500 bg-white checked:border-[#1d5fb4] checked:bg-[#1d5fb4]"
                />
                <svg viewBox="0 0 9 9" className="pointer-events-none col-start-1 row-start-1 size-[9px]" fill="none" aria-hidden="true">
                  <path d="M2 4.500l2 2 3-3.500" stroke="#fff" />
                </svg>
              </span>
              Outward
            </label>
          </div>
        </div>
        <div className="mt-1.5 flex h-[11px] items-center pl-1">
          <label htmlFor="draft-label" className="w-[45px]">Label:</label>
          <input id="draft-label" defaultValue="Draft<3>" className="h-[11px] w-[134px] border-b border-[#ccc] bg-white outline-none" />
        </div>
      </div>
      <div className="mt-3.5 flex h-[17px] items-center pl-1.5 pr-2">
        <button type="button" aria-label="Pin dialog">
          <Icon size="size-4" box={16}>
            <path d="M1 10l4-3h10v3l-5 4H1z" fill="#888" stroke="#222" />
            <path d="M1 10h9v4M10 10l5-3" stroke="#222" />
            <path d="M6 2h4v6H6z" fill={YEL} stroke="#55550a" />
          </Icon>
        </button>
        <button type="submit" className="ml-auto h-[17px] w-14 border border-[#7ab4dc] bg-white">OK</button>
        <button type="button" className="ml-1.5 h-[17px] w-[54px] border border-[#e2e2e2] bg-white">Cancel</button>
        <button type="button" className="ml-1 h-[17px] w-4 border border-[#e2e2e2] bg-white text-[11px] font-bold text-[#2f8fd0]">?</button>
      </div>
    </form>
  );
}

export default function App() {
  return (
    <div className="relative flex min-h-screen flex-col overflow-hidden bg-white font-['DejaVu_Sans_Condensed','Noto_Sans',sans-serif]">
      <header className="bg-[#454545]">
        <TitleBar />
        <TabBar />
      </header>
      <Ribbon />
      <div className="flex grow">
        <DesignExplorer />
        <main className="flex min-w-0 flex-1">
          <ModelView />
        </main>
      </div>
      <footer className="flex h-[15px] border-t border-[#d4d4d4] bg-[#f0f0f0] text-[8px] leading-[10px] text-[#222]">
        <span className="flex-1 pl-0.5">Ready</span>
        <span className="w-[206px] border-l border-[#cfcfcf]" />
      </footer>
      <DraftDialog />
    </div>
  );
}
